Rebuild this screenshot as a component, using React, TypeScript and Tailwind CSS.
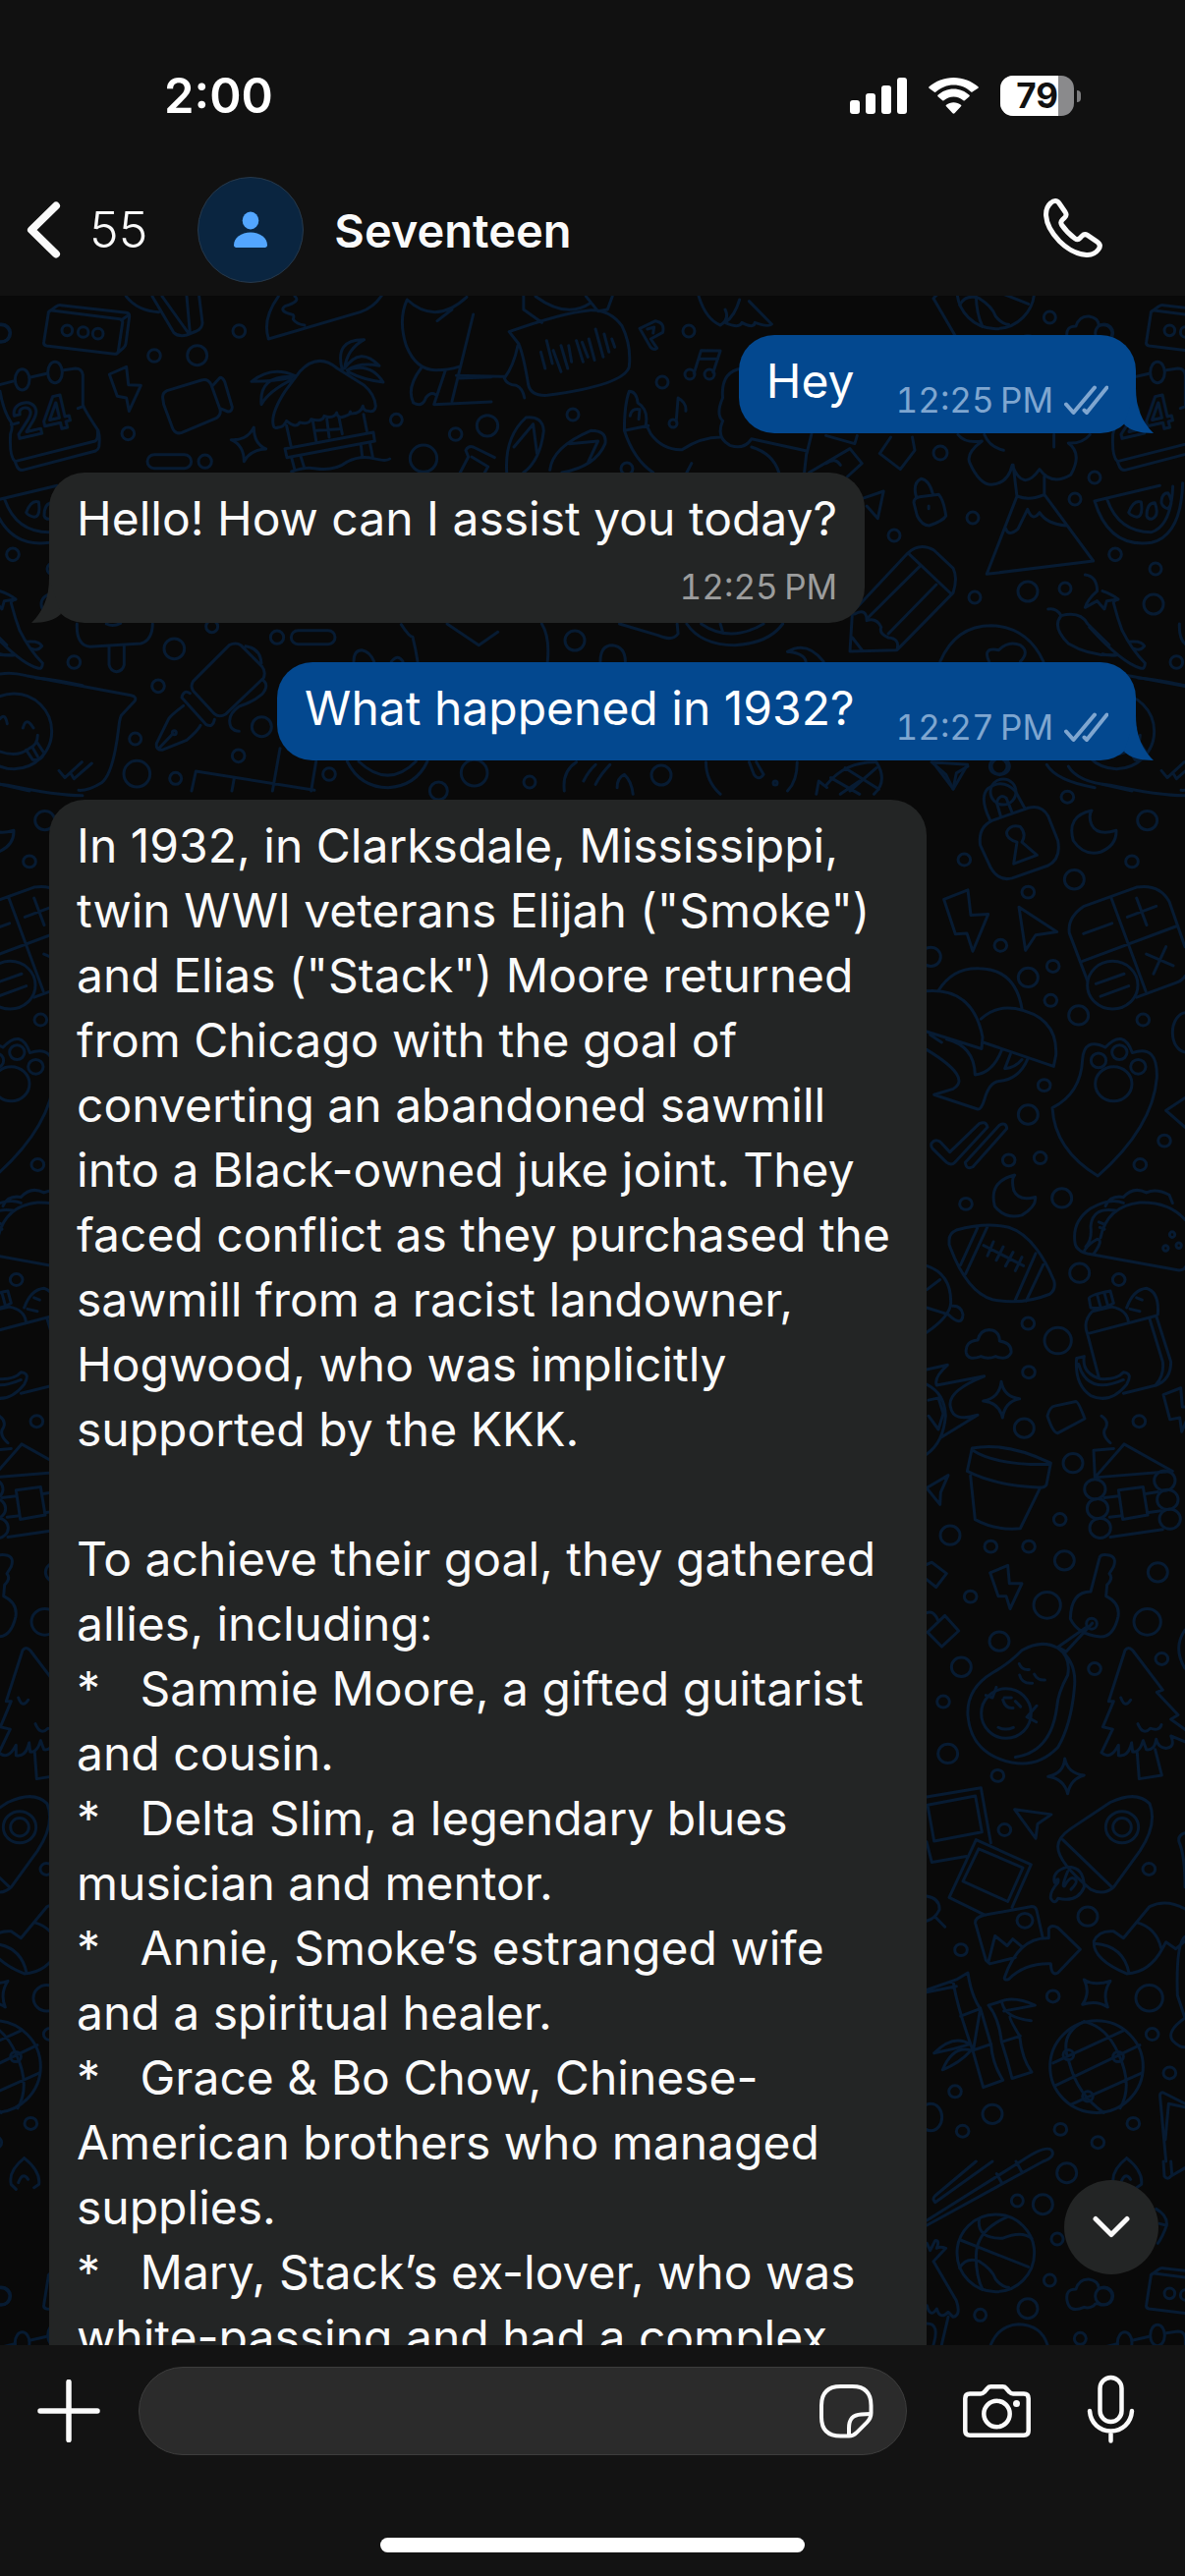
import React from "react";

type Dot = [number, number, number];

/* Line drawings of the chat wallpaper, one string per neighbouring cluster. */
const TOP_LEFT = [
  "M148 70 Q150 62 158 63 L366 89 Q376 91 374 101 L361 188 Q359 197 349 196 L142 171 Q132 169 134 159 Z M148 68 L170 52 Q178 46 186 47 L386 70 Q396 72 395 82 L384 165 Q383 172 376 178 L358 194 M370 93 L394 76",
  "M-2 290 L45 278 M90 268 L146 255 M190 246 L230 240 Q250 240 253 260 V350 Q255 362 300 430 Q306 450 302 480 Q300 488 292 492 L70 550 Q58 552 52 540 L46 525 M0 310 Q10 370 34 405 Q40 420 32 440 Q28 510 46 524 L290 462 Q300 458 298 430 M34 412 L56 406 M238 362 L253 356",
  "M334 258 L386 235 L392 290 L430 292 L394 370 L386 330 L358 325 Z",
  "M497 330 Q495 315 510 308 L615 276 Q635 270 645 290 L672 365 Q676 382 660 392 L555 436 Q538 442 528 425 L500 350 Z M648 294 L672 268 Q680 268 686 280 L709 358 Q708 372 696 372 L672 362",
  "M775 420 Q775 470 812 486 Q765 488 745 524 Q745 475 706 458 Q755 460 775 420 Z",
  "M835 415 Q825 380 870 310 L915 250 Q970 190 1030 240 L1110 290 Q1145 320 1147 355 Q1145 375 1125 370 Q1110 370 1108 355 Q1100 380 1070 378 Q1070 365 1067 380 Q1030 400 1028 375 Q1020 395 990 385 Q985 405 950 395 Q945 412 915 405 Q905 425 875 400 Q865 420 850 420 Q838 425 835 415 Z",
  "M875 415 L888 475 M955 400 L965 460 M1035 390 L1045 440 M1110 380 L1120 430 M870 485 L1140 435 L1144 462 L876 512 Z M965 430 L1035 425 M998 395 L1005 450 M890 512 L900 550 M918 508 L928 540 M1102 475 L1106 508 M1130 470 L1138 510 M890 555 Q930 540 960 545 Q1020 555 1060 525 Q1100 505 1140 515 T1190 516",
  "M900 262 Q830 230 768 280 Q840 280 890 268 M895 265 Q790 260 798 350 Q820 310 890 275 M1045 245 Q1020 150 1112 152 Q1060 180 1052 240 Q1100 170 1158 232 Q1100 220 1060 245 Q1130 220 1170 282 Q1110 275 1062 250",
  "M820 150 Q800 90 850 20 M820 150 L1100 68 Q1140 55 1165 18 M900 20 Q920 35 870 50 Q850 65 890 75 Q900 75 895 90 Q905 105 930 108",
  "M465 20 L530 130 Q545 145 570 138 L600 126 Q618 118 618 100 L608 20 M495 20 L575 132 M570 20 L580 132 M385 20 Q420 65 485 68",
  "M1243 30 Q1330 110 1425 22 M1243 30 Q1215 90 1240 170 Q1270 245 1330 245 Q1370 245 1400 235 M1445 75 L1380 340 M1335 95 L1380 60 M1285 240 Q1240 300 1262 345 Q1290 360 1300 330 Q1315 310 1330 320 M1360 245 L1325 350 L1500 342 M1400 270 L1500 266",
  "M1405 558 L1430 510 L1422 490 Q1430 475 1445 480 L1510 512 M1440 510 L1490 540 L1480 558",
  "M-24 645 L175 598 M15 642 Q50 740 150 740 Q210 720 215 600 M-24 645 Q20 790 150 772 Q240 750 245 590 M80 680 Q95 640 118 648 Q125 690 105 694 Q85 690 80 680 Z M135 690 Q135 650 160 650 Q175 690 150 700 Q138 700 135 690 Z M180 650 Q180 620 200 620 Q220 650 200 668 Q185 665 180 650 Z",
  "M0 920 Q30 930 48 945 Q30 950 35 960 Q45 1000 60 1040 Q90 1100 130 1140 Q130 1160 115 1155 Q60 1140 -40 1030 M80 1075 Q120 1070 128 1088 Q115 1105 95 1095 M0 1112 Q20 1118 45 1115",
  "M235 1020 Q232 1085 275 1090 L430 1080 Q465 1070 466 1020 M325 1020 Q345 1030 368 1018 M333 1090 V1145 Q338 1165 356 1166 Q375 1164 379 1145 V1086",
  "M-10 1175 Q30 1165 80 1178 L400 1238 Q418 1242 412 1255 L370 1300 Q365 1310 362 1340 Q345 1480 310 1505 Q270 1530 240 1528 M0 1310 Q15 1290 22 1325 M70 1338 Q80 1300 102 1338 M-40 1390 Q40 1440 90 1400 Q115 1390 115 1360 M80 1405 L100 1435 Q125 1440 135 1415 L112 1380 M98 1395 L115 1425 M180 1468 L198 1490 L250 1442 M218 1480 L226 1493 L280 1446 M0 1510 L90 1530",
  "M700 1085 Q720 1075 735 1085 L800 1150 Q812 1165 805 1185 L690 1295 Q670 1308 655 1295 L590 1225 Q580 1210 590 1195 Z M750 1088 Q795 1095 798 1140 M800 1190 Q825 1205 800 1235 Q770 1260 730 1272 Q690 1300 705 1335 Q715 1348 730 1348 M580 1232 Q560 1220 555 1245 L630 1328 Q650 1338 655 1312 M560 1270 Q520 1300 515 1310 L478 1385 Q475 1405 495 1405 L570 1375 Q605 1345 612 1330 M485 1400 L525 1358",
  "M585 1530 L598 1470 L960 1528 M715 1492 L708 1530 M855 1400 L832 1530 M965 1440 L950 1530 M1060 1440 Q1100 1520 1185 1520 Q1270 1515 1305 1440 M1095 1440 Q1185 1525 1270 1440",
  "M1225 1022 Q1250 1060 1260 1060 Q1270 1100 1275 1135 M1365 1020 L1462 1085 L1520 1045 M1080 1135 Q1080 1100 1105 1100 Q1130 1105 1142 1135 M1195 1135 Q1215 1110 1230 1135",
].join(" ");

const TOP_LEFT_DOTS: Dot[] = [
  [5, 132, 27], [205, 124, 16], [254, 129, 16], [299, 134, 16], [471, 201, 19], [602, 200, 30], [730, 126, 19],
  [391, 439, 19], [626, 524, 20], [1210, 397, 18], [1293, 515, 41], [1391, 441, 19], [1488, 415, 32], [39, 808, 19],
  [647, 1028, 18], [846, 1061, 20], [532, 1096, 31], [226, 1137, 19], [483, 1210, 19], [799, 1334, 30],
  [413, 1371, 18], [728, 1423, 19], [418, 1478, 40], [536, 1492, 18], [1005, 1479, 19], [1448, 1475, 40],
  [1339, 1530, 27], [43, 1348, 115], [532, 1352, 6],
];

const TOP_RIGHT = [
  "M160 128 Q270 70 330 62 Q370 60 395 110 Q415 170 410 235 Q400 290 240 322 Q205 325 200 290 Q190 200 180 165 Z M226 190 L235 240 M238 155 L250 225 M252 185 L268 250 M268 170 L282 240 M284 170 L290 220 M300 155 L314 220 M312 160 L324 205 M326 150 L338 215 M340 120 L356 205 M358 135 L368 190 M374 150 L380 175",
  "M190 20 V60 L228 100 M178 170 Q170 230 150 270 Q155 290 175 292 Q188 300 192 330 M50 262 L152 265 M215 20 Q280 90 330 40 M320 20 L345 65 L365 60 L375 20",
  "M555 20 Q570 90 600 108 Q620 90 610 60 M640 30 Q630 80 610 100 Q640 120 645 100 Q670 120 672 100 Q700 115 707 105 L660 35",
  "M432 118 L465 95 Q485 100 480 130 L455 150 L468 178 Q462 186 455 176 Z M448 120 L462 114 L460 132",
  "M545 255 L560 185 L600 186 L585 252 M556 210 L595 211 M508 402 L512 330 Q530 345 528 370",
  "M400 430 Q400 350 410 310 Q425 310 428 345 Q450 365 445 410 L455 440 Q480 490 520 488 Q560 450 600 450 M400 430 L450 415 M400 430 Q420 520 460 558 M540 530 L530 558 M645 240 Q600 250 605 330 Q590 380 605 400 Q590 450 620 475 Q650 490 665 455 L780 492 L775 558 M665 480 Q710 500 722 558 M412 385 Q415 360 432 365 L430 395",
  "M155 558 Q150 450 195 390 Q230 385 232 430 Q225 520 190 558 M170 480 L210 410 L218 500 M245 550 Q250 480 330 430 Q365 430 360 470 Q340 540 270 558 M285 470 L345 462 L325 525",
  "M790 440 L780 500 M820 445 L880 470 L885 445 M785 558 L870 485 L895 530 L865 570 M820 530 Q840 510 850 535 M955 450 L932 500 L975 548 L1005 490 L1000 450",
  "M1155 868 L1218 630 Q1245 645 1275 625 L1377 828 Z M1210 535 L1218 632 M1275 570 V628 M1095 442 Q1110 470 1145 462 Q1110 500 1120 530 Q1140 595 1165 595 Q1200 590 1208 535 Q1230 620 1265 548 Q1290 600 1330 565 Q1355 500 1325 468 Q1355 470 1370 442 M1150 442 Q1160 480 1190 490 M1295 480 V442 M1195 730 Q1200 755 1220 730 L1240 670 Q1250 710 1265 680 Q1280 715 1320 720",
  "M1003 650 Q1003 635 1015 632 L1055 625 Q1065 640 1070 690 Q1065 705 1035 720 Q1020 720 1010 690 Z M1008 632 Q1000 590 1018 577 Q1035 580 1043 625 M1034 660 V668 M890 640 L940 615 L928 698 L905 660",
  "M875 985 L990 805 Q1015 770 1045 795 L1085 850 Q1095 880 1085 925 L968 1100 L870 1104 Z M992 805 L1082 930 M1015 845 L905 1005 M1050 900 L950 1050 M880 990 Q905 970 905 1010 Q925 1000 935 1030 Q930 1050 950 1062 Q975 1065 968 1100 M875 1062 L895 1100",
  "M530 1020 Q560 1085 630 1085 Q700 1080 730 1020 M560 1020 Q620 1080 690 1020 M600 1020 L605 1045 M390 1020 L470 1055 Q500 1075 512 1050 L510 1020 M228 1020 Q245 1060 240 1135 M350 1135 Q350 1085 375 1085 Q402 1090 402 1135 M740 1105 Q780 1070 815 1135 M740 1105 Q775 1110 778 1135 M1058 1135 Q1090 1025 1165 1025 Q1240 1030 1273 1135 M1160 1135 Q1145 1090 1180 1100 Q1200 1070 1225 1085 Q1245 1105 1225 1135",
  "M1283 975 Q1300 970 1310 995 Q1290 1030 1325 1080 Q1370 1120 1425 1115 M1310 995 Q1350 980 1365 1020 L1410 1085 M1360 870 Q1385 875 1385 920 Q1365 945 1360 970 L1385 950 L1400 975 L1405 950 L1428 945",
  "M275 1530 Q270 1470 300 1442 M315 1500 Q325 1470 340 1450 M340 1510 Q350 1480 370 1450 M385 1520 Q385 1490 400 1480 Q415 1500 418 1540 M570 1442 Q570 1500 600 1540 M760 1442 Q760 1500 740 1530 M660 1442 L670 1480 Q680 1500 690 1480 L675 1442",
  "M800 1540 L805 1500 L822 1520 M822 1510 Q860 1440 925 1442 Q950 1500 920 1540 M830 1490 L890 1540 M860 1460 L930 1525 M890 1500 L850 1540 M925 1460 L870 1530 M1040 1442 L1115 1450 L1085 1525 L1070 1480 Z M1280 1450 Q1300 1500 1380 1520 M1470 1185 Q1510 1190 1568 1208",
].join(" ");

const TOP_RIGHT_DOTS: Dot[] = [
  [701, 337, 6], [674, 389, 6], [583, 422, 6], [638, 477, 6], [957, 461, 7], [1114, 486, 6], [1094, 508, 6],
  [990, 527, 6], [910, 545, 6], [1176, 579, 6], [992, 608, 6], [1046, 602, 10], [1084, 599, 6], [1174, 615, 10],
  [585, 652, 10], [539, 796, 6], [673, 789, 10], [1017, 780, 8], [1021, 806, 13], [789, 797, 2], [702, 381, 5],
  [722, 381, 5], [685, 431, 4],
];

const MIDDLE = [
  "M203 175 Q195 135 240 120 L350 92 Q390 85 410 110 L440 165 Q450 205 410 220 L300 248 Q260 256 235 225 Z M232 118 Q200 70 225 50 Q270 25 310 55 L338 92 M265 110 L253 80 Q262 60 282 70 L300 102 M305 216 L315 168 Q280 160 284 145 Q295 128 325 134 Q345 150 330 168 L376 197 Z",
  "M543 98 Q465 110 487 165 Q520 200 570 190 Q620 175 618 142 Q560 155 543 130 Q532 110 543 98 Z M308 906 Q228 920 247 975 Q280 1005 330 995 Q375 975 371 955 Q320 965 305 940 Q297 915 308 906 Z",
  "M92 295 L165 274 L174 330 L227 328 L180 410 L162 370 L127 372 Z M321 312 L437 367 L372 374 L341 408 Z",
  "M530 475 L475 370 Q468 335 520 310 L680 268 Q750 260 780 300 L828 400 M680 512 L800 480 Q820 475 828 465 M602 290 L708 498 M515 432 L800 355 M518 371 L605 348 M652 334 L740 310 M680 292 L711 352 M710 416 L792 442 M770 400 L732 460 M556 482 L642 460 M570 510 L656 487",
  "M75 497 Q120 445 200 448 Q310 450 330 537 M39 498 Q180 490 210 600 L207 626 L39 588 M205 560 Q250 530 310 537 Q440 555 434 640 L427 665 L212 612 M100 605 Q185 620 187 684 Q240 680 268 630 M39 628 Q180 690 120 715 L62 728 L195 760 Q205 762 215 740 Q230 700 260 698 Q320 695 347 650 M50 595 L85 612 M295 638 L278 670 Q310 668 330 650",
  "M423 757 Q510 725 515 650 Q520 600 585 623 Q640 580 667 635 Q745 615 742 690 Q730 800 562 908 Q430 850 423 757 Z",
  "M55 835 Q65 825 80 832 L110 855 L200 792 Q220 785 225 800 L125 878 Q115 886 100 878 L58 848 Q50 840 55 835 Z M157 878 L262 795 Q282 788 284 803 L180 888 Q160 895 157 878 Z",
  "M108 1050 Q108 1035 130 1028 Q220 1010 290 1022 Q370 1040 428 1140 Q435 1160 415 1170 Q330 1195 240 1182 Q160 1165 108 1060 Z M195 1022 L143 1105 M225 1020 L158 1125 M372 1080 L308 1186 M395 1105 L343 1185 M213 1062 L335 1107 M243 1054 L225 1085 M273 1065 L252 1095 M303 1077 L280 1108 M330 1088 L310 1118",
  "M160 1300 Q155 1275 195 1272 Q205 1245 240 1250 Q262 1255 262 1274 Q300 1278 297 1300 Q285 1318 250 1308 Q225 1315 205 1308 Q165 1318 160 1300 Z M267 1364 Q275 1398 323 1402 Q278 1408 271 1444 Q260 1410 212 1407 Q262 1400 267 1364 Z",
  "M493 1060 Q480 1010 540 980 Q600 955 640 968 M620 985 Q545 975 540 1020 Q545 1050 525 1065 M493 1060 Q500 1075 530 1080 L810 1117 Q828 1116 828 1110 M570 1045 Q590 975 690 967 Q780 965 828 1005 M585 975 Q600 950 640 955 Q670 930 710 945 Q740 935 780 950 L790 968 M520 1075 Q530 1060 560 1048 Q580 1050 550 1080 M565 1010 L578 1014 M568 1022 L582 1026",
  "M530 1258 Q515 1230 545 1208 L605 1198 Q650 1205 655 1230 M535 1180 Q535 1172 600 1163 L610 1190 Q575 1205 540 1200 Z M560 1172 L570 1198 M582 1168 L592 1194 M565 1355 L530 1258 L740 1218 L785 1320 Q785 1360 740 1372 L640 1390 M720 1225 L760 1320 Q765 1350 740 1370 M650 1200 Q670 1160 710 1157 Q750 1165 745 1215 M680 1178 L697 1183 M660 1203 L690 1208 M497 1312 L520 1308 Q512 1345 570 1358 Q620 1360 640 1343 Q670 1345 650 1370 Q600 1415 540 1395 Q490 1370 497 1312 Z M503 1325 Q530 1395 640 1360",
  "M408 1440 Q415 1420 430 1418 L495 1408 Q502 1408 522 1446 L440 1478 Q425 1478 408 1440 Z M573 1440 Q595 1450 587 1465 Q570 1480 600 1500",
  "M39 1337 L103 1327 Q60 1355 70 1372 L215 1352 Q100 1385 112 1420 Q120 1455 195 1438 L85 1487 M39 1370 Q95 1390 97 1440 Q90 1500 39 1525 M45 1405 L75 1400 L90 1435 L75 1470 L45 1440 M39 1107 Q115 1125 113 1190 Q110 1220 39 1255 M39 1200 L105 1215 Q148 1245 150 1215 Q145 1195 118 1196 M40 1160 L80 1138",
  "M68 0 L120 50 L130 15 L165 0 M472 0 Q500 35 600 42 Q750 65 828 65 M828 735 L770 763 L828 800 M762 1393 L815 1378 L820 1420 L850 1420 L818 1475 L812 1444 L782 1448 Z",
].join(" ");

/* [cx, cy, rx, ry] */
const MIDDLE_OVALS: [number, number, number, number][] = [
  [607, 485, 77, 53], [610, 704, 56, 38], [564, 652, 23, 16], [628, 634, 23, 16], [685, 666, 23, 16], [789, 1038, 8, 6],
  [769, 1068, 8, 6], [809, 1062, 8, 6], [713, 120, 30, 21], [490, 251, 30, 21], [349, 468, 30, 21], [503, 552, 30, 21],
  [349, 772, 30, 21], [452, 957, 30, 21], [506, 1123, 30, 21], [440, 1273, 41, 29], [337, 1467, 30, 21],
  [52, 422, 30, 21], [262, 0, 30, 19], [154, 207, 19, 13], [349, 279, 19, 13], [469, 68, 19, 13], [666, 211, 19, 13],
  [265, 397, 19, 13], [425, 443, 19, 13], [418, 519, 19, 13], [700, 562, 19, 13], [398, 707, 19, 13],
  [290, 873, 19, 13], [386, 868, 19, 13], [765, 830, 19, 13], [691, 883, 19, 13], [159, 970, 19, 13],
  [626, 1138, 19, 13], [349, 1235, 19, 13], [351, 1343, 19, 13], [688, 1452, 19, 13], [832, 590, 42, 44],
];

const LOWER = [
  "M163 38 L178 -13 Q280 -28 418 20 L405 68 Q400 75 380 74 Q250 70 163 38 Z M180 -8 Q250 25 412 23 M173 48 L187 145 Q250 170 325 165 L385 76",
  "M553 52 L642 -22 L790 38 L553 52 L549 -8 L610 -12 M582 97 L625 93 M598 140 L630 137 M600 184 L760 167 M708 88 L745 84 M712 130 L755 126 M625 80 L700 73 L714 135 L638 145 Z",
  "M39 75 L105 47 L82 85 L80 112 Z M39 245 L55 240 L100 265 L68 295 L39 278 M233 263 L287 247 L292 287 L330 287 L294 343 L282 315 L258 315 Z M42 395 L95 358 L137 392 L85 427 Z M39 352 Q60 345 75 370",
  "M540 305 L567 230 Q570 220 600 225 Q620 230 610 250 L597 265 Q610 275 590 290 L587 315 Q630 330 624 360 Q610 405 570 405 Q500 400 478 365 Q480 305 540 305 M545 375 L465 438 L440 428 L530 382",
  "M165 580 Q160 520 240 485 Q290 465 330 435 Q390 410 440 430 Q500 460 490 520 Q480 600 440 650 Q380 695 300 684 Q175 665 165 580 Z M440 430 Q480 450 470 490 Q440 530 437 560 Q420 660 310 672 M322 465 Q330 480 352 478 M323 490 Q330 510 362 508 M368 488 Q378 502 400 501 M272 545 Q280 565 303 563 M276 540 H298 M258 606 Q280 614 304 606 M220 535 L240 540 L252 517 M375 558 L345 583 L374 594 M310 548 L326 560",
  "M595 548 L645 435 Q655 425 668 435 L760 523 L742 528 L807 578 L785 588 L850 622 L828 638 L785 625 Q800 650 770 652 Q745 650 740 632 Q735 658 710 655 L700 635 Q690 662 668 660 L665 640 Q655 672 625 668 L625 645 Q600 680 573 662 L607 610 L577 605 L610 548 Z M682 662 L688 720 L757 712 L737 655 M632 540 Q645 565 662 545 M684 598 Q700 625 722 608 Q750 615 756 600",
  "M461 675 Q470 708 520 712 Q478 720 470 753 Q458 720 410 715 Q458 708 461 675 Z M308 788 L420 799 L378 820 L372 852 Z",
  "M39 760 L205 740 L235 862 M39 860 L55 905 L160 892 M42 778 L188 758 L208 838 L62 858 Z M300 1005 L358 910 L190 855 L108 983 L218 1022 M198 875 L333 917 L287 992 L150 947 Z",
  "M310 1116 L232 1130 L220 1122 L188 1040 Q185 1028 215 1022 L360 1003 Q372 1003 375 1012 L393 1070 M228 1125 L248 1068 L285 1090 L302 1075 L330 1092 M277 1160 Q320 1070 412 1073 L412 1052 Q420 1042 440 1050 L508 1098 L440 1150 Q420 1158 418 1130 Q340 1128 290 1164 Q275 1168 277 1160 Z",
  "M440 870 Q440 850 480 830 L600 772 Q680 745 720 775 Q745 820 690 880 L610 960 Q580 980 540 965 Q440 905 440 870 Z M455 855 L605 960 M470 915 Q420 925 430 950 Q445 935 440 950 Q415 970 418 985 Q430 1000 440 985 Q500 995 520 960 Q520 915 470 915 M470 925 Q450 960 460 958 Q480 930 495 945 Q500 950 480 965",
  "M550 1080 Q565 1055 610 1058 L640 1073 L720 1003 Q770 985 828 1008 M550 1080 Q545 1120 650 1152 Q720 1150 760 1095 L770 1082 L800 1097 L828 1080 M680 1038 Q740 1050 755 1095 M553 1085 Q640 1090 657 1150 M520 1165 Q550 1180 600 1168 Q575 1195 592 1226 Q560 1210 515 1220 Q540 1195 520 1165 Z",
  "M520 1258 Q440 1285 475 1350 Q500 1420 580 1460 M520 1258 Q590 1270 625 1330 Q670 1400 630 1450 M425 1350 L640 1278 M432 1400 L690 1310 M480 1442 L697 1372",
  "M39 1188 L130 1165 L165 1150 Q175 1200 203 1230 L182 1320 M120 1168 Q130 1220 180 1322 L212 1404 L272 1388 Q240 1350 236 1310 L203 1228 M143 1246 L200 1230 M180 1322 L236 1308 M39 1193 L130 1180 M228 1222 Q260 1250 268 1303 Q285 1340 300 1384 L360 1370 Q330 1340 323 1290 Q290 1250 293 1248 M268 1303 L325 1290 M228 1222 L280 1210 Q320 1205 370 1222 L275 1235 M270 1218 Q280 1250 358 1256 M62 1328 Q120 1285 172 1308 Q120 1320 62 1328 M88 1365 Q120 1310 175 1322 Q140 1350 88 1365",
  "M39 980 Q80 985 78 1010 Q65 1030 39 1035 M68 1028 L95 1048 M828 1070 Q800 1085 805 1200 L828 1250 Q770 1280 790 1300 Q810 1315 828 1315 M828 1440 L760 1415 Q750 1415 752 1425 L770 1568 M828 1448 L778 1440 L768 1520 M828 840 Q805 845 810 860 Q828 890 828 960 M828 390 Q790 430 828 475",
].join(" ");

const LOWER_OVALS: [number, number, number, number][] = [
  [553, 78, 32, 22], [561, 121, 32, 22], [569, 164, 32, 22], [766, 59, 32, 22], [775, 101, 32, 22], [782, 144, 32, 22],
  [543, 376, 16, 12], [282, 575, 76, 55], [339, 1034, 24, 16], [636, 827, 50, 35], [636, 827, 28, 20],
  [558, 1358, 142, 102], [472, 1332, 16, 11], [624, 1336, 16, 11], [531, 1424, 16, 11], [446, 145, 19, 13],
  [235, 205, 19, 13], [351, 205, 19, 13], [173, 316, 19, 13], [90, 549, 19, 13], [552, 476, 19, 13],
  [757, 454, 19, 13], [256, 713, 19, 13], [277, 833, 19, 13], [718, 920, 19, 13], [144, 1099, 19, 13],
  [425, 1202, 19, 13], [728, 1286, 19, 13], [781, 1372, 19, 13], [126, 1413, 19, 13], [149, 1501, 19, 13],
  [448, 1497, 19, 13], [670, 1484, 19, 13], [562, 1526, 19, 13], [111, 180, 30, 21], [460, 236, 30, 21],
  [745, 262, 30, 21], [407, 335, 41, 29], [713, 372, 41, 29], [261, 415, 30, 21], [145, 472, 30, 21],
  [104, 664, 30, 21], [531, 1025, 30, 21], [719, 1206, 41, 29], [240, 1463, 30, 21], [486, 20, 30, 21],
  [52, 1470, 34, 30],
];

const BOTTOM = [
  "M650 175 Q640 235 720 235 Q780 210 810 235 M592 240 L800 322 M735 170 Q640 210 640 290 Q640 350 660 392 M590 325 Q610 290 650 305 Q690 330 700 360 Q720 385 740 385",
  "M490 195 L845 0 M515 125 L690 0 M515 125 Q505 115 515 105 L640 0 M490 180 L780 -2 Q850 -50 870 -35 Q885 -15 845 0 M703 38 L720 68 M762 0 L780 32",
  "M1100 -10 Q1050 30 1060 70 L1075 85 M1100 -10 Q1150 30 1145 70 L1130 80 M1082 65 Q1095 30 1112 55 M1212 0 L1215 45 Q1225 58 1235 45 L1278 20 M1235 0 L1238 40 M1190 145 Q1225 165 1222 195 Q1210 230 1195 250 M1200 190 L1220 195",
  "M918 425 Q912 390 945 390 Q955 358 985 360 Q1015 365 1015 388 Q1050 380 1056 410 Q1055 440 1020 438 Q1005 430 1000 440 Q985 450 970 445 Q925 465 918 425 Z",
  "M490 250 L500 272 L515 242 Q530 240 520 265 Q530 258 548 265 L510 305 L580 425 Q595 470 570 475 L555 460 Q530 485 520 450 Q500 480 490 440 M555 475 L535 560 M490 495 Q530 495 510 560 M685 560 Q710 500 770 497 Q840 500 858 560",
].join(" ");

const BOTTOM_DOTS: Dot[] = [
  [700, 280, 118], [917, 35, 30], [766, 120, 18], [844, 131, 30], [888, 237, 18], [865, 363, 18], [798, 449, 30],
  [653, 469, 18], [958, 541, 18],
];

const TILE_W = 1122;
const TILE_H = 1998;

function Doodle({ d }: { d: string }) {
  return <path d={d} vectorEffect="non-scaling-stroke" />;
}

function Ovals({ items }: { items: number[][] }) {
  return (
    <>
      {items.map(([cx, cy, rx, ry], i) => (
        <ellipse key={i} cx={cx} cy={cy} rx={rx} ry={ry ?? rx} vectorEffect="non-scaling-stroke" />
      ))}
    </>
  );
}

function Wallpaper() {
  return (
    <svg className="absolute inset-0 h-full w-full" aria-hidden="true">
      <defs>
        <g id="doodles">
          <g transform="translate(0 -6) scale(.33333)">
            <Doodle d={TOP_LEFT} />
            <Ovals items={TOP_LEFT_DOTS} />
            <ellipse cx="68" cy="274" rx="22" ry="32" vectorEffect="non-scaling-stroke" />
            <ellipse cx="168" cy="252" rx="22" ry="32" vectorEffect="non-scaling-stroke" />
            <rect x="450" y="503" width="134" height="42" rx="21" vectorEffect="non-scaling-stroke" />
            <rect x="889" y="1040" width="134" height="42" rx="21" vectorEffect="non-scaling-stroke" />
            <text
              x="52"
              y="456"
              fontSize="140"
              fontWeight="600"
              fontFamily="Inter, sans-serif"
              transform="rotate(-13 52 456)"
              vectorEffect="non-scaling-stroke"
            >
              24
            </text>
          </g>
          <g transform="translate(440 -6) scale(.48852 .33333)">
            <Doodle d={TOP_RIGHT} />
          </g>
          <g transform="translate(0 -301)">
            <Ovals items={TOP_RIGHT_DOTS} />
          </g>
          <g transform="translate(930 479) scale(.33333 .45918)">
            <Doodle d={MIDDLE} />
            <Ovals items={MIDDLE_OVALS} />
          </g>
          <g transform="translate(930 1179) scale(.33333 .45918)">
            <Doodle d={LOWER} />
            <Ovals items={LOWER_OVALS} />
          </g>
          <g transform="translate(780 1899) scale(.33333)">
            <Doodle d={BOTTOM} />
            <Ovals items={BOTTOM_DOTS} />
          </g>
        </g>
      </defs>
      <g fill="none" stroke="#071b32" strokeWidth="3" strokeLinecap="round" strokeLinejoin="round">
        <use href="#doodles" />
        <use href="#doodles" x={-TILE_W} />
        <use href="#doodles" x={TILE_W} />
        <use href="#doodles" y={-TILE_H} />
        <use href="#doodles" y={TILE_H} />
        <use href="#doodles" x={-TILE_W} y={TILE_H} />
        <use href="#doodles" x={TILE_W} y={TILE_H} />
        <use href="#doodles" x={-TILE_W} y={-TILE_H} />
      </g>
    </svg>
  );
}

function StatusBar() {
  return (
    <div className="flex h-[75px] items-center justify-between pr-[106px] pl-[167px] text-white">
      <time className="text-[49px] leading-none font-semibold">2:00</time>
      <div className="flex items-center gap-[22px]">
        <svg className="h-[37px] w-[58px]" viewBox="0 0 58 37" fill="currentColor" aria-label="Signal strength" role="img">
          <rect x="0" y="23" width="10" height="14" rx="3" />
          <rect x="16" y="16" width="10" height="21" rx="3" />
          <rect x="32" y="8" width="10" height="29" rx="3" />
          <rect x="48" y="0" width="10" height="37" rx="3" />
        </svg>
        <svg className="h-[37px] w-[51px]" viewBox="0 0 51 37" fill="currentColor" aria-label="Wi-Fi" role="img">
          <path d="M25.5 7.5c6.800 0 13 2.600 17.700 7 .4.400 1 .4 1.400 0l5.800-3.700c.6-.5.6-1 .1-1.500C43.800 3.500 35 0 25.500 0S7.200 3.500.5 9.300c-.5.500-.5 1 0 1.500l5.500 3.900c.500.400 1 .3 1.500-.100 4.800-4.400 11.200-7.100 18-7.100z" />
          <path d="M25.500 19.500c3.800 0 7.200 1.400 9.900 3.800.4.400 1 .4 1.400 0l4.700-4c.5-.5.5-1 0-1.500-4.300-3.900-9.900-6.300-16-6.300s-11.700 2.400-16 6.300c-.5.5-.5 1 0 1.500l4.700 4c.4.400 1 .4 1.400 0 2.700-2.400 6.100-3.800 9.900-3.800z" />
          <path d="M33 29.300c.500-.5.500-1.200-.1-1.600-2-1.600-4.600-2.500-7.400-2.500s-5.400.9-7.400 2.500c-.6.400-.6 1.100-.1 1.600l6.500 6.900c.6.600 1.400.6 2 0z" />
        </svg>
        <div className="flex items-center gap-[3px]" role="img" aria-label="Battery 79 percent">
          <div className="relative flex h-[41px] w-[75px] items-center justify-center overflow-hidden rounded-[13px] bg-[#8a8a8c]">
            <span className="absolute inset-y-0 left-0 w-[79%] bg-white" />
            <span className="relative text-[35px] leading-none font-bold text-[#111111]">79</span>
          </div>
          <span className="h-3 w-1 rounded-r-full bg-[#7c7c7e]" />
        </div>
      </div>
    </div>
  );
}

function ChatHeader() {
  return (
    <header className="shrink-0 bg-[#111111] pt-[60px] pb-[13px]">
      <StatusBar />
      <div className="mt-[45px] flex h-[108px] items-center pr-[84px] pl-[26px]">
        <button type="button" className="flex items-center gap-7 text-[#fafafa]" aria-label="Back, 55 unread chats">
          <svg className="h-[60px] w-[37px]" viewBox="0 0 37 60" fill="none" stroke="currentColor" strokeWidth="8" strokeLinecap="round" strokeLinejoin="round">
            <path d="M31 5.500 6 30l25 24.500" />
          </svg>
          <span className="text-[50px] leading-none font-light">55</span>
        </button>
        <button type="button" className="ml-[51px] flex items-center gap-[31px] text-left">
          <span className="flex h-[108px] w-[108px] items-center justify-center rounded-full border border-[#27394b] bg-[#0a2540]">
            <svg className="h-[38px] w-[36px]" viewBox="0 0 36 38" fill="#53a6ff">
              <ellipse cx="18" cy="9.500" rx="8.300" ry="9" />
              <path d="M18 21.500c9.500 0 17 5.500 17 13 0 1.500-1 2.500-2.500 2.500h-29C2 37 1 36 1 34.500c0-7.500 7.500-13 17-13z" />
            </svg>
          </span>
          <h1 className="text-[47px] leading-none font-semibold text-[#fafafa]">Seventeen</h1>
        </button>
        <button type="button" className="mb-1 ml-auto text-[#fafafa]" aria-label="Voice call">
          <svg className="h-[60px] w-[60px]" viewBox="0 0 60 60" fill="none" stroke="currentColor" strokeWidth="5" strokeLinejoin="round">
            <path d="M7.500 4.500C10.500 1.800 14 2 16 5l6.200 9c1.300 2 .9 4-.7 5.500l-2.300 2.300c-1.700 1.700-1.800 3.400-.6 5.200 3.500 5.200 8.300 10 13.400 13.700 1.800 1.300 3.600 1.300 5.200-.4l2-2.200c1.600-1.700 3.600-2 5.500-.7l10.300 7c2.600 1.900 3 4.600.9 7.500-2.800 3.900-6.800 5.800-12.200 5.500-9.800-.6-19.500-6-27.500-14C8.500 35.500 3.200 26.500 2.600 17.500 2.300 12.500 4 7.500 7.500 4.500z" />
          </svg>
        </button>
      </div>
    </header>
  );
}

function Ticks() {
  return (
    <svg className="h-[31px] w-[45px]" viewBox="0 0 45 31" fill="none" stroke="currentColor" strokeWidth="4" strokeLinecap="round" strokeLinejoin="round" aria-label="Delivered" role="img">
      <path d="M2 19.500 9.500 28 31 2.500M20.500 25.500l2.500 2.500L43.500 2.500" />
    </svg>
  );
}

function Tail({ className }: { className: string }) {
  return (
    <svg className={className} viewBox="0 0 30 46" fill="currentColor" aria-hidden="true">
      <path d="M12 0C12 20 18 34 30 46 16 46 6 43 0 37z" />
    </svg>
  );
}

function Outgoing({ text, time }: { text: string; time: string }) {
  return (
    <article className="relative flex items-end gap-[42px] self-end rounded-[36px] bg-[#03488f] px-7 py-3.5 text-[#03488f]">
      <p className="pb-1.5 text-[48px] leading-[66px] text-white">{text}</p>
      <div className="flex items-center gap-[11px] text-[#7fa6d0]">
        <time className="text-[35px] leading-10 tabular-nums">{time}</time>
        <Ticks />
      </div>
      <Tail className="absolute -right-[18px] bottom-0 h-[46px] w-[30px]" />
    </article>
  );
}

const STORY = `In 1932, in Clarksdale, Mississippi,
twin WWI veterans Elijah ("Smoke")
and Elias ("Stack") Moore returned
from Chicago with the goal of
converting an abandoned sawmill
into a Black-owned juke joint. They
faced conflict as they purchased the
sawmill from a racist landowner,
Hogwood, who was implicitly
supported by the KKK.

To achieve their goal, they gathered
allies, including:
*   Sammie Moore, a gifted guitarist
and cousin.
*   Delta Slim, a legendary blues
musician and mentor.
*   Annie, Smoke’s estranged wife
and a spiritual healer.
*   Grace & Bo Chow, Chinese-
American brothers who managed
supplies.
*   Mary, Stack’s ex-lover, who was
white-passing and had a complex`;

function Conversation() {
  return (
    <main className="relative min-h-0 flex-1 overflow-hidden bg-[#090909]">
      <Wallpaper />
      <div className="relative flex flex-col items-start gap-10 px-[50px] pt-10">
        <Outgoing text="Hey" time={"12:25\u2009PM"} />
        <article className="relative rounded-[36px] bg-[#232525] px-7 pt-3.5 pb-[17px] text-[#232525]">
          <p className="text-[48px] leading-[66px] text-[#fafafa]">Hello! How can I assist you today?</p>
          <time className="mt-4 block text-right text-[35px] leading-10 tabular-nums text-[#9c9d9d]">{"12:25\u2009PM"}</time>
          <Tail className="absolute bottom-0 -left-[18px] h-[46px] w-[30px] -scale-x-100" />
        </article>
        <Outgoing text="What happened in 1932?" time={"12:27\u2009PM"} />
        <article className="rounded-[36px] bg-[#232525] py-3.5 pr-[37px] pl-7">
          <p className="text-[48px] leading-[66px] whitespace-pre text-[#fafafa]">{STORY}</p>
        </article>
      </div>
      <button
        type="button"
        aria-label="Scroll to latest message"
        className="absolute right-[27px] bottom-[72px] flex h-24 w-24 items-center justify-center rounded-full bg-[#232525] text-[#fafafa]"
      >
        <svg className="h-[24px] w-[38px]" viewBox="0 0 38 24" fill="none" stroke="currentColor" strokeWidth="5" strokeLinecap="round" strokeLinejoin="round">
          <path d="M3 3.500 19 19.500 35 3.500" />
        </svg>
      </button>
    </main>
  );
}

function Composer() {
  return (
    <footer className="shrink-0 bg-[#131313] pt-[22px] pb-6 text-[#fafafa]">
      <form className="flex items-center pr-[51px] pl-[38px]" onSubmit={(e) => e.preventDefault()}>
        <button type="button" aria-label="Attach">
          <svg className="h-16 w-16" viewBox="0 0 64 64" fill="none" stroke="currentColor" strokeWidth="5.500" strokeLinecap="round">
            <path d="M32 2.500v59M3 32h58" />
          </svg>
        </button>
        <div className="ml-[39px] flex h-[90px] min-w-0 flex-1 items-center rounded-full border border-[#3d3d3d] bg-[#2b2b2b] pr-[33px] pl-10">
          <input type="text" aria-label="Message" className="min-w-0 flex-1 bg-transparent text-[48px] outline-none" />
          <button type="button" aria-label="Stickers">
            <svg className="h-[55px] w-[55px]" viewBox="0 0 55 55" fill="none" stroke="currentColor" strokeWidth="4" strokeLinejoin="round">
              <path d="M30 52.500h-8.500C8.500 52.500 2 46 2 33.500V21.500C2 8.500 8.500 2 21.500 2h12C46 2 52.500 8.500 52.500 21.500V29c0 4-1.200 6.500-4 9.300L38 48.800c-2.600 2.600-4.500 3.700-8 3.700z" />
              <path d="M30 52.500v-8.200C30 35 34 31 42.500 30.500l9.500-.5" />
            </svg>
          </button>
        </div>
        <button type="button" className="ml-[57px]" aria-label="Camera">
          <svg className="h-[54px] w-[69px]" viewBox="0 0 69 54" fill="none" stroke="currentColor" strokeWidth="4.500" strokeLinejoin="round">
            <path d="M7 9.500h11c1.500 0 2.600-.5 3.500-1.600l3.500-4C26 2.700 27 2.300 28.500 2.300h12c1.500 0 2.500.4 3.500 1.600l3.500 4c.9 1.100 2 1.600 3.500 1.600h11c3 0 4.700 1.700 4.700 4.700v33c0 3-1.700 4.500-4.700 4.500H7c-3 0-4.700-1.500-4.700-4.500v-33c0-3 1.700-4.700 4.700-4.700z" />
            <circle cx="34.500" cy="30" r="13.200" />
            <circle cx="54.500" cy="19.500" r="3.500" fill="currentColor" stroke="none" />
          </svg>
        </button>
        <button type="button" className="mb-1 ml-[57px]" aria-label="Record voice message">
          <svg className="h-[70px] w-[49px]" viewBox="0 0 49 70" fill="none" stroke="currentColor" strokeWidth="4.500" strokeLinecap="round">
            <rect x="13.500" y="3" width="22" height="45" rx="11" />
            <path d="M3 37c1 12.500 10 20.500 21.500 20.500S45 49.500 46 37M24.500 57.500v10" />
          </svg>
        </button>
      </form>
      <div className="mx-auto mt-[84px] h-[15px] w-[432px] max-w-full rounded-full bg-white" />
    </footer>
  );
}

export default function App() {
  return (
    <div className="flex h-screen flex-col overflow-hidden bg-[#111111] font-['Inter',sans-serif]">
      <ChatHeader />
      <Conversation />
      <Composer />
    </div>
  );
}
